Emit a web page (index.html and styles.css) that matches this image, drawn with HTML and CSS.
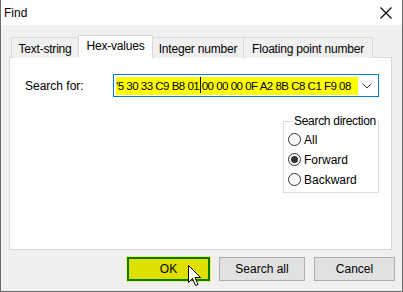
FILE: index.html
```html
<!DOCTYPE html>
<html lang="en">
<head>
    <meta charset="UTF-8">
    <title>Find</title>
    <link rel="stylesheet" href="styles.css">
</head>
<body>
    <div class="window">
        <div class="titlebar">
            <span class="title">Find</span>
            <svg class="close" width="12" height="12" viewBox="0 0 12 12">
                <path d="M0.5 0.5 L11.5 11.5 M11.5 0.5 L0.5 11.5" stroke="#000" stroke-width="1.1" fill="none"/>
            </svg>
        </div>

        <div class="content">
            <div class="tabs">
                <div class="tab tab-text">Text-string</div>
                <div class="tab tab-hex active">Hex-values</div>
                <div class="tab tab-int">Integer number</div>
                <div class="tab tab-float">Floating point number</div>
            </div>

            <div class="panel">
                <div class="search-row">
                    <span class="label">Search for:</span>
                    <div class="combo">
                        <span class="hex">'5 30 33 C9 B8 01<span class="caret"></span>00 00 00 0F A2 8B C8 C1 F9 08</span>
                        <svg class="arrow" width="10" height="6" viewBox="0 0 10 6">
                            <path d="M0.5 0.5 L5 5 L9.5 0.5" stroke="#333" stroke-width="1" fill="none"/>
                        </svg>
                    </div>
                </div>

                <div class="direction-row">
                    <fieldset class="group">
                        <legend>Search direction</legend>
                        <label class="radio"><span class="dot"></span>All</label>
                        <label class="radio"><span class="dot checked"></span>Forward</label>
                        <label class="radio"><span class="dot"></span>Backward</label>
                    </fieldset>
                </div>
            </div>

            <div class="buttons">
                <button class="btn btn-ok">OK</button>
                <button class="btn btn-all">Search all</button>
                <button class="btn btn-cancel">Cancel</button>
            </div>
        </div>

        <svg class="cursor" width="14" height="24" viewBox="0 0 14 24">
            <path d="M0.5 0.5 L0.5 17.5 L4.5 13.5 L7.5 20.5 L10 19.5 L7 12.5 L12.5 12.5 Z" fill="#fff" stroke="#000" stroke-width="1"/>
        </svg>
    </div>
</body>
</html>
```

FILE: styles.css
```css
* {
    margin: 0;
    padding: 0;
    box-sizing: border-box;
}

body {
    font-family: 'Liberation Sans', Arial, sans-serif;
    font-size: 12px;
    color: #000;
    background: #fff;
}

.window {
    position: relative;
    width: 403px;
    height: 292px;
    display: flex;
    flex-direction: column;
    border-left: 1px solid #6b6b6b;
    border-right: 1px solid #6b6b6b;
    border-bottom: 1px solid #6b6b6b;
    overflow: hidden;
}

.titlebar {
    height: 25px;
    background: #fff;
    display: flex;
    align-items: center;
    justify-content: space-between;
    padding: 0 10px 0 3px;
}

.close {
    margin-top: 1px;
}

.content {
    flex: 1;
    background: #f0f0f0;
    padding: 10px 10px 0 8px;
    display: flex;
    flex-direction: column;
}

.tabs {
    display: flex;
    height: 22px;
    padding-left: 2px;
    position: relative;
    z-index: 1;
    letter-spacing: -0.2px;
}

.tab {
    margin-top: 2px;
    height: 21px;
    border: 1px solid #d9d9d9;
    border-bottom: none;
    background: #f0f0f0;
    display: flex;
    align-items: center;
    justify-content: center;
    white-space: nowrap;
    padding-top: 1px;
}

.tab-text {
    width: 67px;
    border-right: none;
}

.tab-hex {
    width: 75px;
}

.tab-int {
    width: 91px;
    border-left: none;
}

.tab-float {
    width: 129px;
    border-left: none;
}

.tab.active {
    margin-top: 0;
    height: 23px;
    background: #fff;
    padding-top: 0;
    padding-bottom: 2px;
}

.panel {
    height: 193px;
    background: #fff;
    border: 1px solid #d9d9d9;
    padding: 16px 12px 0 15px;
}

.search-row {
    display: flex;
    align-items: center;
}

.label {
    width: 88px;
}

.combo {
    flex: 1;
    height: 23px;
    border: 1px solid #0078d7;
    display: flex;
    align-items: center;
    padding: 0 6px 0 2px;
    justify-content: space-between;
}

.hex {
    background: #ffff00;
    height: 18px;
    line-height: 18px;
    white-space: pre;
    overflow: hidden;
    width: 242px;
    font-size: 11.5px;
    letter-spacing: -0.5px;
}

.caret {
    display: inline-block;
    width: 1px;
    height: 16px;
    margin: 0 1px 0 0.5px;
    vertical-align: -3px;
    background: #000;
}

.direction-row {
    display: flex;
    justify-content: flex-end;
    margin-top: 17px;
}

.group {
    width: 96px;
    height: 79px;
    border: 1px solid #dcdcdc;
    padding: 5px 0 0 4px;
    display: flex;
    flex-direction: column;
    gap: 7px;
}

.group legend {
    margin-left: 5px;
    padding: 0 1px;
    white-space: nowrap;
    letter-spacing: -0.3px;
}

.radio {
    display: flex;
    align-items: center;
    gap: 3px;
    height: 13px;
}

.dot {
    width: 13px;
    height: 13px;
    border: 1px solid #333;
    border-radius: 50%;
    background: #fff;
    display: flex;
    align-items: center;
    justify-content: center;
}

.dot.checked::after {
    content: "";
    width: 7px;
    height: 7px;
    border-radius: 50%;
    background: #333;
}

.buttons {
    display: flex;
    justify-content: flex-end;
    gap: 9px;
    margin-top: 7px;
    margin-right: -3px;
}

.btn {
    font-family: inherit;
    font-size: 12px;
    height: 24px;
    background: #e1e1e1;
    border: 1px solid #adadad;
    color: #000;
}

.btn-ok {
    width: 83px;
    background: #e0e000;
    border: 2px solid #007a00;
    outline: 1px solid #f0f060;
}

.btn-all {
    width: 86px;
}

.btn-cancel {
    width: 81px;
}

.cursor {
    position: absolute;
    left: 187px;
    top: 265px;
}
```
